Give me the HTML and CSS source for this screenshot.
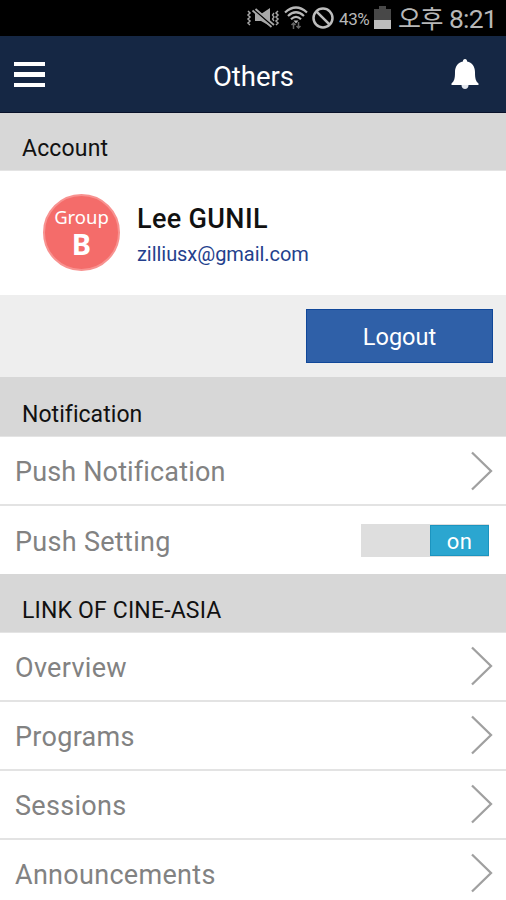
FILE: index.html
```html
<!DOCTYPE html>
<html lang="en">
<head>
<meta charset="utf-8">
<title>Others</title>
<link rel="stylesheet" href="styles.css">
</head>
<body>
<div class="status">
  <svg class="mute" width="34" height="24" viewBox="0 0 34 24" fill="none" stroke="#a8a8a8" stroke-width="1.8">
    <path d="M2 5l2 2-2 2 2 2-2 2 2 2-2 2 2 2M32 5l-2 2 2 2-2 2 2 2-2 2 2 2-2 2" stroke-width="1.5"/>
    <path d="M28 7l-1.500 2 1.500 2-1.500 2 1.500 2" stroke-width="1.300"/>
    <path d="M9 8h6l9-6v18l-9-5H9z" fill="#a8a8a8" stroke="none"/>
    <path d="M8 3.500l19 16.500" stroke="#000" stroke-width="3.500"/>
    <path d="M6.500 4.500l19 16.500M9.500 3l18.500 16" stroke-width="1.800"/>
  </svg>
  <svg class="wifi" width="24" height="26" viewBox="0 0 24 26" fill="none" stroke="#b8b8b8" stroke-width="2.2">
    <path d="M1 7.500Q12-2.500 23 7.500M4 11Q12 3.500 20 11M7 14.200Q12 9.500 17 14.200"/>
    <path d="M9.500 15.500h5L12 18.500z" fill="#b8b8b8" stroke="none"/>
    <path d="M9.500 24v-6M7.500 20l2-2 2 2M14.500 17v6M12.500 21l2 2 2-2" stroke="#666" stroke-width="1.5"/>
  </svg>
  <svg class="block" width="22" height="22" viewBox="0 0 22 22" fill="none" stroke="#bdbdbd" stroke-width="2.500">
    <circle cx="11" cy="11" r="9.500"/><path d="M4.300 4.300l13.400 13.400"/>
  </svg>
  <span class="percent">43%</span>
  <svg class="battery" width="17" height="23" viewBox="0 0 17 23">
    <path d="M5 0h7v3h5v11H0V3h5z" fill="#484848"/><path d="M0 14h17v9H0z" fill="#bdbdbd"/>
  </svg>
  <span class="period">오후</span>
  <span class="clock">8:21</span>
</div>
<header class="bar">
  <div class="menu"><i></i><i></i><i></i></div>
  <h1 class="title">Others</h1>
  <svg class="bell" width="28" height="32" viewBox="0 0 28 32" fill="#fff">
    <path d="M14 0c1.500 0 2 1.100 2.100 2.500C21 3.500 24 7.500 24 13c0 7 .8 9 3.500 11.500V26h-27v-1.500C3.200 22 4 20 4 13 4 7.500 7 3.500 11.900 2.500 12 1.100 12.500 0 14 0z"/>
    <path d="M10.500 26h7c0 2.500-1.500 4-3.500 4s-3.500-1.500-3.500-4z" fill="#e3e7ee"/>
  </svg>
</header>
<h2 class="section first">Account</h2>
<div class="account">
  <div class="avatar"><span class="group">Group</span><b class="letter">B</b></div>
  <div class="person"><span class="name">Lee GUNIL</span><span class="mail">zilliusx@gmail.com</span></div>
</div>
<div class="actions"><div class="logout">Logout</div></div>
<h2 class="section second">Notification</h2>
<div class="row"><span>Push Notification</span><svg class="chevron" width="24" height="40" viewBox="0 0 24 40"><path d="M2 1.500L21 20 2 38.500"/></svg></div>
<div class="row setting"><span>Push Setting</span><div class="switch"><div class="knob">on</div></div></div>
<h2 class="section links">LINK OF CINE-ASIA</h2>
<div class="row"><span>Overview</span><svg class="chevron" width="24" height="40" viewBox="0 0 24 40"><path d="M2 1.500L21 20 2 38.500"/></svg></div>
<div class="row"><span>Programs</span><svg class="chevron" width="24" height="40" viewBox="0 0 24 40"><path d="M2 1.500L21 20 2 38.500"/></svg></div>
<div class="row"><span>Sessions</span><svg class="chevron" width="24" height="40" viewBox="0 0 24 40"><path d="M2 1.500L21 20 2 38.500"/></svg></div>
<div class="row"><span>Announcements</span><svg class="chevron" width="24" height="40" viewBox="0 0 24 40"><path d="M2 1.500L21 20 2 38.500"/></svg></div>
</body>
</html>
```
FILE: styles.css
```css
* { box-sizing: border-box; }
body { margin: 0; width: 506px; height: 900px; overflow: hidden; background: #fff; font-family: Roboto, "Noto Sans CJK KR", sans-serif; }
h1, h2 { margin: 0; font-weight: 400; }
svg { display: block; flex: none; }

.status { display: flex; align-items: center; height: 36px; padding-left: 246px; background: #000; color: #b8b8b8; white-space: nowrap; }
.wifi { margin-left: 4px; }
.block { margin-left: 4px; }
.percent { width: 31px; margin: 2px 0 0 5px; font-size: 17px; letter-spacing: -0.4px; }
.battery { margin-left: 4px; margin-top: -1px; }
.period { width: 46px; margin: -2px 0 0 7px; font: 25px/38px "Noto Sans CJK KR", sans-serif; letter-spacing: -0.5px; }
.clock { margin-left: 5px; font-size: 26.500px; letter-spacing: -0.8px; }

.bar { display: flex; align-items: center; justify-content: space-between; height: 77px; padding: 0 27px 0 14px; background: #152744; border-bottom: 1px solid #08112a; color: #fff; }
.menu { display: flex; flex-direction: column; gap: 6px; width: 31px; margin-top: 1px; }
.menu i { height: 4.500px; background: #fff; }
.title { margin: 5px 0 0 11px; font-size: 27.500px; line-height: 32px; }
.bell { margin-top: 2px; }

.section { height: 59px; padding: 21px 0 0 22px; background: #d7d7d7; border-bottom: 1px solid #e4e4e4; color: #111; font-size: 23px; line-height: 32px; }
.first { height: 58px; padding-top: 20px; letter-spacing: 0.15px; }
.second { height: 60px; padding-top: 22px; letter-spacing: 0.05px; }
.links { letter-spacing: 0.17px; }

.account { display: flex; align-items: center; height: 124px; padding-left: 43px; }
.avatar { display: flex; flex-direction: column; align-items: center; width: 77px; height: 77px; padding-top: 8px; margin-top: -2px; border: 2px solid #f89290; border-radius: 50%; background: #f46c6a; color: #fff; font-family: "Noto Sans", sans-serif; }
.group { font-size: 18.500px; line-height: 26px; }
.letter { font-size: 29px; line-height: 27px; }
.person { display: flex; flex-direction: column; margin: 5px 0 0 17px; }
.name { color: #111; font-size: 27px; font-weight: 500; line-height: 36px; letter-spacing: 0.35px; }
.mail { color: #243f8d; font-size: 20px; line-height: 34px; letter-spacing: -0.05px; }

.actions { display: flex; justify-content: flex-end; height: 82px; padding: 14px 13px 0 0; background: #eee; }
.logout { width: 187px; height: 54px; border: 1px solid #104799; background: #2f60a8; color: #fff; font-size: 23.500px; line-height: 54px; text-align: center; }

.row { display: flex; align-items: center; justify-content: space-between; height: 69px; padding: 0 12px 0 15px; border-bottom: 2px solid #e3e3e3; color: #828282; font-size: 27px; letter-spacing: 0.3px; }
.second + .row { letter-spacing: 0.15px; }
.row span { padding-top: 3px; }
.setting { height: 68px; border-bottom: 0; }
.links ~ .row span { padding-top: 2px; }
.links ~ .row .chevron { margin-top: -1px; }
.chevron { fill: none; stroke: #a0a0a0; stroke-width: 2.300; }
.switch { display: flex; justify-content: flex-end; width: 128px; height: 33px; margin-right: 5px; padding: 1px 0; background: #dedede; }
.knob { width: 59px; border: 1px solid #1c94bf; background: #2ba6d0; color: #fff; font-size: 22px; line-height: 32px; text-align: center; }
```
